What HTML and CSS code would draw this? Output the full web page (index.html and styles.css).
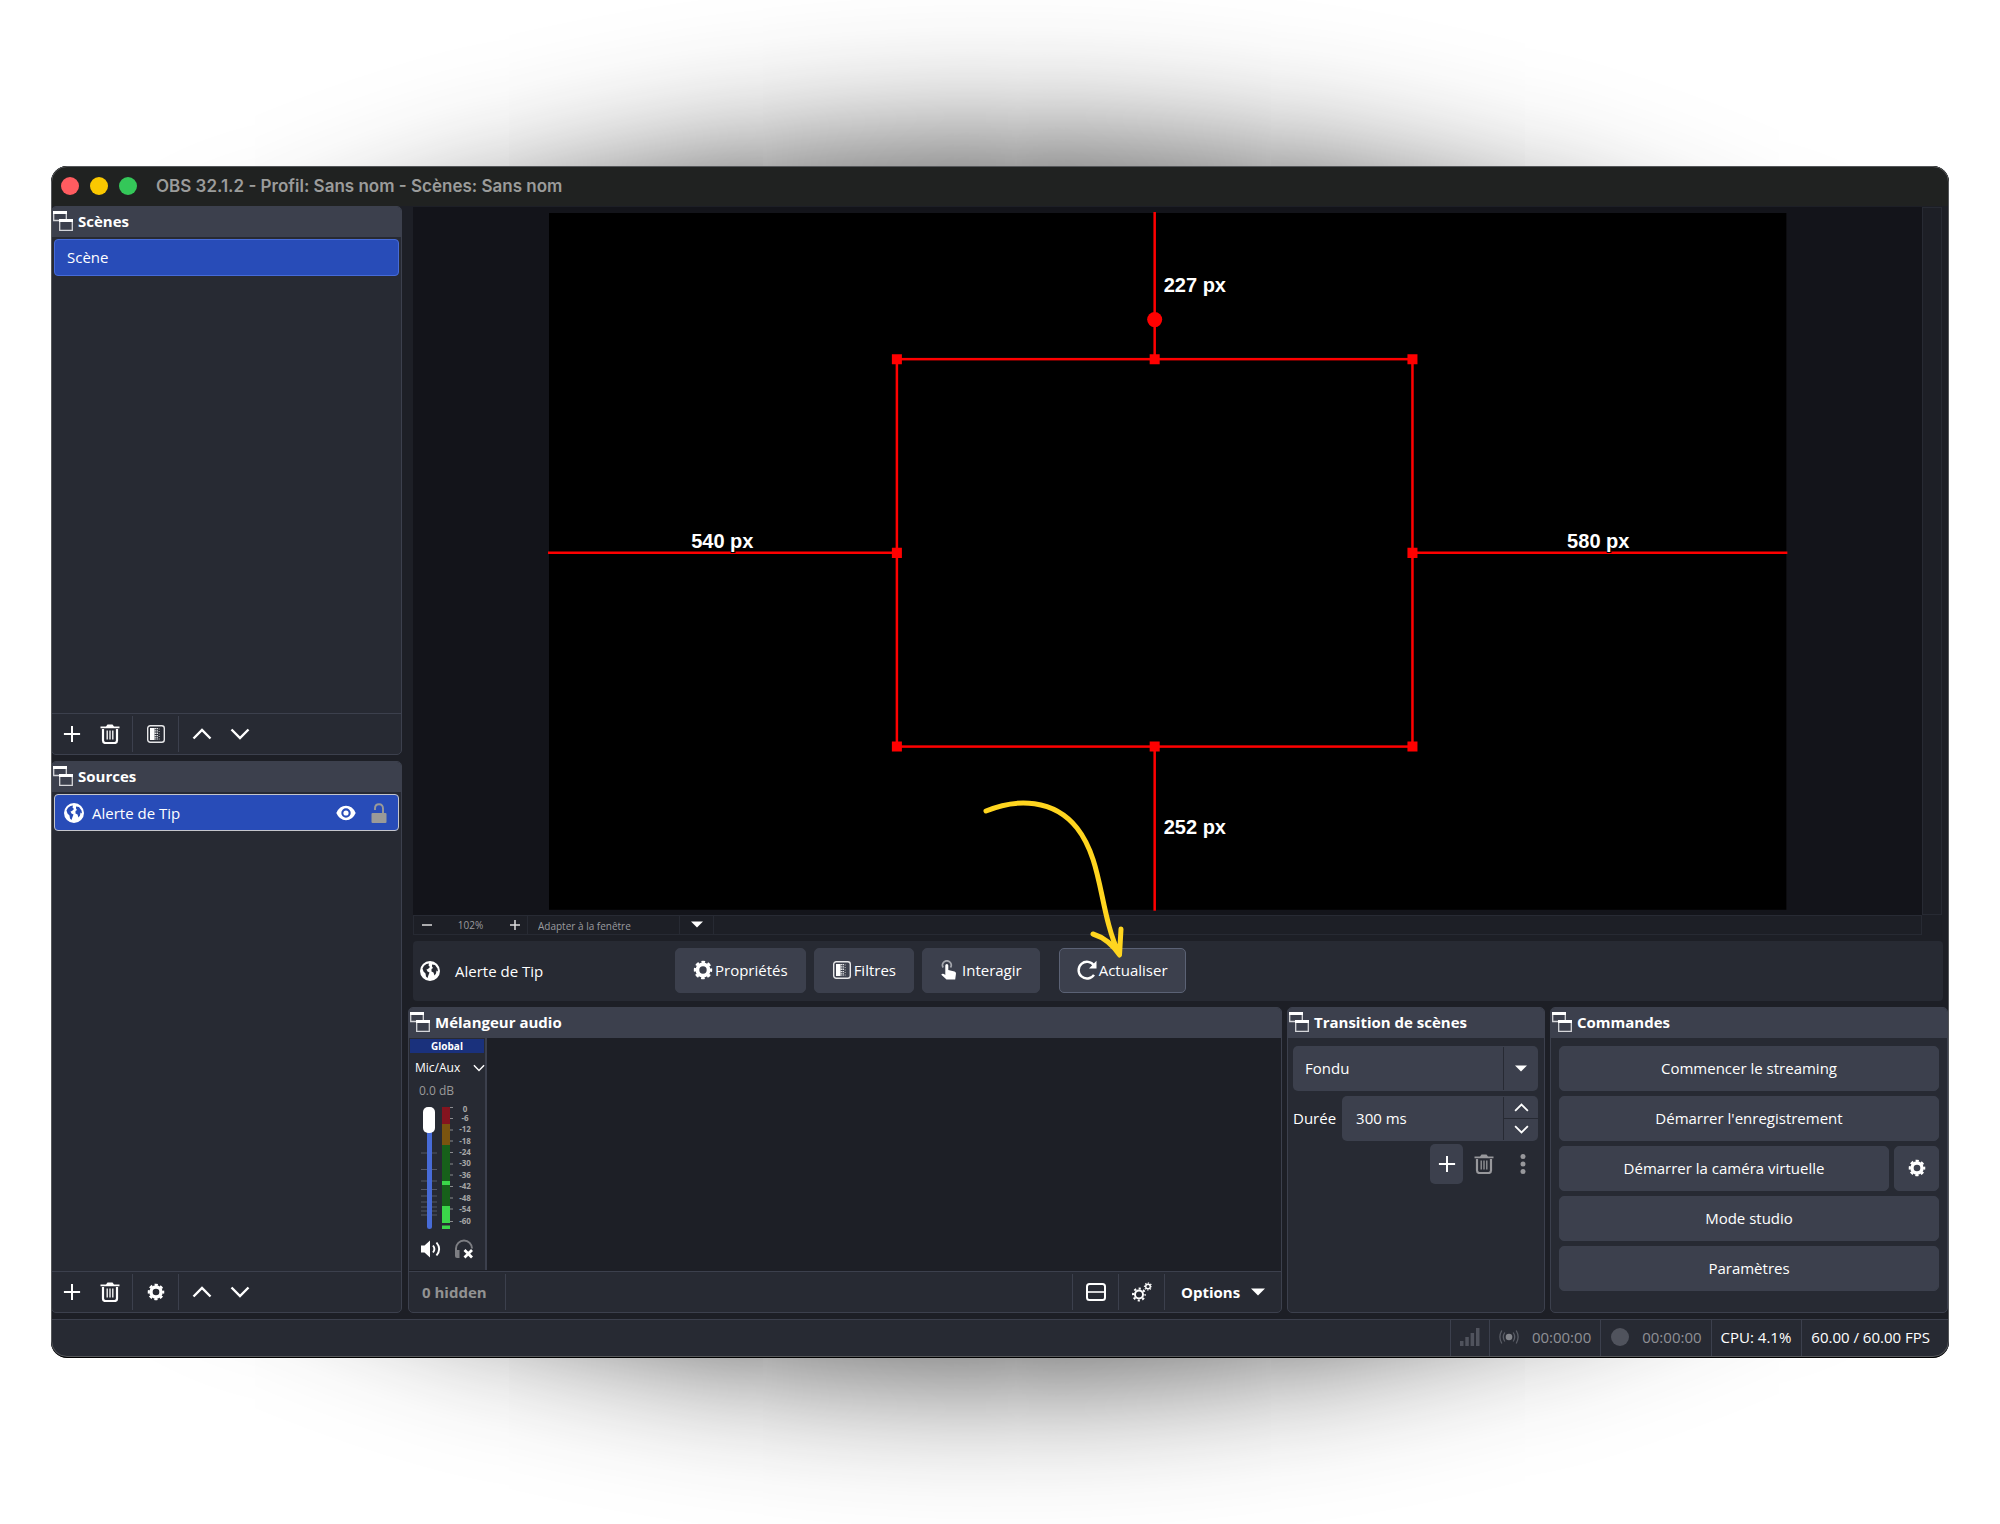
FILE: index.html
```html
<!DOCTYPE html>
<html lang="fr">
<head>
<meta charset="utf-8">
<meta name="viewport" content="width=device-width, initial-scale=1">
<title>OBS 32.1.2 - Profil: Sans nom - Scènes: Sans nom</title>
<link rel="stylesheet" href="styles.css">
</head>
<body>
<svg class="sprite" aria-hidden="true">
  <symbol id="i-dock" viewBox="0 0 20 20">
    <path d="M6 9.5H.7V1H13.300V8" fill="none" stroke="#d5d6da" stroke-width="1.300"/>
    <path d="M0 0H14V3H0Z" fill="#fff"/>
    <path d="M6.700 9H19.300V19.300H6.700Z" fill="none" stroke="#d5d6da" stroke-width="1.300"/>
    <path d="M6 8H20V11H6Z" fill="#fff"/>
  </symbol>
  <symbol id="i-plus" viewBox="0 0 20 20"><path d="M10 1V19M1 10H19" fill="none" stroke="currentColor" stroke-width="2.200"/></symbol>
  <symbol id="i-trash" viewBox="0 0 20 20">
    <path d="M.5 2.500H6L7.500.500H12.500L14 2.500H19.500V4.300H.5Z" fill="currentColor"/>
    <path d="M3 5V16.500Q3 19 5.500 19H14.500Q17 19 17 16.500V5" fill="none" stroke="currentColor" stroke-width="2.200"/>
    <path d="M7.200 6.500V15.500M10 6.500V15.500M12.800 6.500V15.500" stroke="currentColor" stroke-width="1.300"/>
  </symbol>
  <symbol id="i-filter" viewBox="0 0 20 20">
    <rect x="1.700" y="1.700" width="16.600" height="16.600" rx="2.500" fill="none" stroke="#e6e6e8" stroke-width="1.400"/>
    <path d="M4 4H8.500V16H4Z" fill="#fff"/>
    <path d="M9.200 4V16M11.200 4V16" stroke="#fff" stroke-width="1.300" stroke-dasharray="1.300 1"/>
    <path d="M13.200 4.500V16" stroke="#aaa" stroke-width="1.200" stroke-dasharray="1 1.500"/>
  </symbol>
  <symbol id="i-up" viewBox="0 0 20 20"><path d="M1.500 14.500L10 6L18.500 14.500" fill="none" stroke="currentColor" stroke-width="2.400"/></symbol>
  <symbol id="i-down" viewBox="0 0 20 20"><path d="M1.500 5.500L10 14L18.500 5.500" fill="none" stroke="currentColor" stroke-width="2.400"/></symbol>
  <symbol id="i-gear" viewBox="0 0 20 20">
    <circle cx="10" cy="10" r="5.600" fill="none" stroke="currentColor" stroke-width="3.800"/>
    <circle cx="10" cy="10" r="8" fill="none" stroke="currentColor" stroke-width="2.400" stroke-dasharray="3.600 2.683" stroke-dashoffset="1.800"/>
  </symbol>
  <symbol id="i-gears" viewBox="0 0 20 20">
    <circle cx="7" cy="12.500" r="4" fill="none" stroke="currentColor" stroke-width="2"/>
    <circle cx="7" cy="12.500" r="6" fill="none" stroke="currentColor" stroke-width="2" stroke-dasharray="2.200 2.512" stroke-dashoffset="1.100"/>
    <circle cx="16" cy="4.500" r="2.300" fill="none" stroke="currentColor" stroke-width="1.400"/>
    <circle cx="16" cy="4.500" r="3.500" fill="none" stroke="currentColor" stroke-width="1.200" stroke-dasharray="1.300 1.449" stroke-dashoffset=".65"/>
  </symbol>
  <symbol id="i-globe" viewBox="0 0 20 20">
    <path fill-rule="evenodd" fill="currentColor" d="M10 0a10 10 0 1 0 0 20a10 10 0 1 0 0-20ZM6.500 3L9 2.500L8.500 4.500L10 6L8 8L6.500 8.500L7.500 10.500L9.500 11.500L8.500 14L7.500 17L6 15.500L5.500 12.500L3.500 10.500L2.500 7.500L4 4.800ZM12 3.500L15 4L17.500 7.500L18 10.500L16.500 9.500L16 12.500L14.500 14.500L13.500 11.500L11.500 10.500L11.500 8L13 7L12 5.500Z"/>
  </symbol>
  <symbol id="i-eye" viewBox="0 0 20 20">
    <path fill-rule="evenodd" fill="#fff" d="M.3 10Q3.500 2.800 10 2.800T19.700 10Q16.500 17.200 10 17.200T.3 10ZM10 5.300a4.700 4.700 0 1 0 0 9.400a4.700 4.700 0 1 0 0-9.400Z"/>
    <circle cx="10" cy="10" r="2.600" fill="#fff"/>
  </symbol>
  <symbol id="i-unlock" viewBox="0 0 20 20">
    <path d="M6 7V5.500Q6 1.200 10 1.200T14 5.500V11" fill="none" stroke="#9a9a98" stroke-width="1.900"/>
    <rect x="2.500" y="10" width="15" height="10" rx="1" fill="#9a9a98"/>
  </symbol>
  <symbol id="i-hand" viewBox="0 0 20 20">
    <path d="M3.200 7.500A4.300 4.300 0 1 1 10.500 7.500" fill="none" stroke="#a4a6ad" stroke-width="1.700"/>
    <path d="M5.300 5.500Q5.300 4 6.800 4T8.300 5.500V10L14.500 11.500Q16 12 16 13.500L15.200 19.500H6.500L1.300 14.800Q2 13 4 14L5.300 15Z" fill="#fff"/>
  </symbol>
  <symbol id="i-refresh" viewBox="0 0 20 20">
    <path d="M17 5.500A8.400 8.400 0 1 0 17 14.800" fill="none" stroke="#fff" stroke-width="2.400"/>
    <path d="M19.500.8V8.500H12Z" fill="#fff"/>
  </symbol>
  <symbol id="i-speaker" viewBox="0 0 20 20">
    <path d="M0 6.500H3.500L9 1.500V18.500L3.500 13.500H0Z" fill="#fff"/>
    <path d="M12 6.500Q14.800 10 12 13.500M15.500 3.500Q20.800 10 15.500 16.500" fill="none" stroke="#fff" stroke-width="1.900"/>
  </symbol>
  <symbol id="i-phones" viewBox="0 0 20 20">
    <path d="M2 13V9.500A8 8 0 0 1 18 9.500" fill="none" stroke="#7d7e83" stroke-width="2"/>
    <path d="M1 11H5.500V19H3Q1 19 1 17Z" fill="#7d7e83"/>
    <path d="M10.500 11L18 18.500M18 11L10.500 18.500" stroke="#fff" stroke-width="2.800"/>
  </symbol>
  <symbol id="i-layout" viewBox="0 0 20 20">
    <rect x="1" y="2" width="18" height="16" rx="2.500" fill="none" stroke="#fff" stroke-width="2"/><path d="M1 10H19" stroke="#fff" stroke-width="1.600"/>
  </symbol>
  <symbol id="i-tri" viewBox="0 0 14 8"><path d="M0 .5H14L7 7.500Z" fill="#fff"/></symbol>
  <symbol id="i-dots" viewBox="0 0 20 20"><g fill="currentColor"><circle cx="10" cy="2.500" r="2.500"/><circle cx="10" cy="10" r="2.500"/><circle cx="10" cy="17.500" r="2.500"/></g></symbol>
  <symbol id="i-bars" viewBox="0 0 20 20"><path d="M0 14H3.500V19H0ZM5.300 10H8.800V19H5.300ZM10.600 6H14.100V19H10.600ZM16 1H19.500V19H16Z" fill="#50535d"/></symbol>
  <symbol id="i-live" viewBox="0 0 20 20">
    <circle cx="10" cy="10" r="3.300" fill="#83858b"/>
    <path d="M5.800 5.500Q2.800 10 5.800 14.500M14.200 5.500Q17.200 10 14.200 14.500M2.800 3.500Q-1 10 2.800 16.500M17.200 3.500Q21 10 17.200 16.500" fill="none" stroke="#5a5d66" stroke-width="1.300"/>
  </symbol>
</svg>

<div class="stage">
  <main class="window">
    <header class="titlebar">
      <span class="light red"></span><span class="light yellow"></span><span class="light green"></span>
      <h1>OBS 32.1.2 - Profil: Sans nom - Scènes: Sans nom</h1>
    </header>

    <div class="workspace">
      <div class="side">
        <section class="dock">
          <h2><svg class="icon"><use href="#i-dock"/></svg>Scènes</h2>
          <ul class="list"><li class="row scene">Scène</li></ul>
          <div class="tools">
            <button aria-label="Ajouter une scène"><svg class="icon sm"><use href="#i-plus"/></svg></button>
            <button aria-label="Supprimer la scène"><svg class="icon"><use href="#i-trash"/></svg></button>
            <i class="sep"></i>
            <button aria-label="Filtres de la scène"><svg class="icon"><use href="#i-filter"/></svg></button>
            <i class="sep"></i>
            <button aria-label="Monter la scène"><svg class="icon"><use href="#i-up"/></svg></button>
            <button aria-label="Descendre la scène"><svg class="icon"><use href="#i-down"/></svg></button>
          </div>
        </section>
        <section class="dock">
          <h2><svg class="icon"><use href="#i-dock"/></svg>Sources</h2>
          <ul class="list">
            <li class="row source">
              <svg class="icon"><use href="#i-globe"/></svg><span>Alerte de Tip</span>
              <button aria-label="Visible"><svg class="icon"><use href="#i-eye"/></svg></button>
              <button aria-label="Déverrouillé"><svg class="icon"><use href="#i-unlock"/></svg></button>
            </li>
          </ul>
          <div class="tools">
            <button aria-label="Ajouter une source"><svg class="icon sm"><use href="#i-plus"/></svg></button>
            <button aria-label="Supprimer la source"><svg class="icon"><use href="#i-trash"/></svg></button>
            <i class="sep"></i>
            <button aria-label="Propriétés de la source"><svg class="icon sm"><use href="#i-gear"/></svg></button>
            <i class="sep"></i>
            <button aria-label="Monter la source"><svg class="icon"><use href="#i-up"/></svg></button>
            <button aria-label="Descendre la source"><svg class="icon"><use href="#i-down"/></svg></button>
          </div>
        </section>
      </div>

      <div class="center">
        <div class="preview">
          <div class="view">
            <svg class="canvas" viewBox="0 0 1236 696">
              <rect width="1236" height="696" fill="#000"/>
              <g fill="none" stroke="#f00" stroke-width="2.500">
                <rect x="347.500" y="146" width="515" height="387"/>
                <path d="M605 -1V146M605 533V697M-1 339.500H347M863 339.500H1237"/>
              </g>
              <g fill="#f00">
                <circle cx="605" cy="106.500" r="7.500"/>
                <path d="M342.500 141h10v10h-10zM600 141h10v10h-10zM857.500 141h10v10h-10zM342.500 334.500h10v10h-10zM857.500 334.500h10v10h-10zM342.500 528h10v10h-10zM600 528h10v10h-10zM857.500 528h10v10h-10z"/>
              </g>
              <g class="measure">
                <text x="614" y="79">227 px</text>
                <text x="614" y="620">252 px</text>
                <text x="142" y="335">540 px</text>
                <text x="1017" y="335">580 px</text>
              </g>
            </svg>
          </div>
          <div class="vscroll"></div>
          <div class="zoombar">
            <button aria-label="Zoom arrière"><svg viewBox="0 0 10 10" width="10" height="10"><path d="M0 5H10" stroke="#ddd" stroke-width="1.500"/></svg></button>
            <output>102%</output>
            <button aria-label="Zoom avant"><svg viewBox="0 0 10 10" width="10" height="10"><path d="M0 5H10M5 0V10" stroke="#ddd" stroke-width="1.500"/></svg></button>
            <div class="scale">
              <select aria-label="Échelle de l'aperçu"><option>Adapter à la fenêtre</option></select>
              <span class="scale-arrow"><svg width="12" height="7"><use href="#i-tri"/></svg></span>
            </div>
          </div>
        </div>

        <div class="context">
          <svg class="icon"><use href="#i-globe"/></svg>
          <span class="context-name">Alerte de Tip</span>
          <button class="btn"><svg class="icon"><use href="#i-gear"/></svg>Propriétés</button>
          <button class="btn"><svg class="icon"><use href="#i-filter"/></svg>Filtres</button>
          <button class="btn"><svg class="icon"><use href="#i-hand"/></svg>Interagir</button>
          <button class="btn refresh"><svg class="icon"><use href="#i-refresh"/></svg>Actualiser
            <svg class="arrow" viewBox="980 798 150 164" aria-hidden="true"><path d="M986 812C1017 799 1054 800 1077 829C1103 862 1099 912 1119 955M1093 935Q1109 940 1119.500 956L1121 930"/></svg>
          </button>
        </div>

        <div class="docks">
          <section class="dock">
            <h2><svg class="icon"><use href="#i-dock"/></svg>Mélangeur audio</h2>
            <div class="mixer">
              <div class="strip">
                <div class="tag">Global</div>
                <button class="channel">Mic/Aux<svg width="12" height="12"><use href="#i-down"/></svg></button>
                <div class="db">0.0 dB</div>
                <div class="levels">
                  <div class="fader">
                    <svg class="ticks" viewBox="0 0 16 122" width="16" height="122"><path d="M0 46H16M0 62.500H16M0 74H16M0 82.500H16M0 89H16M0 95H16M0 100H16M0 104H16M0 108H16" stroke="#555966" stroke-width="1"/></svg>
                    <input type="range" min="0" max="100" value="100" aria-label="Volume Mic/Aux">
                  </div>
                  <svg class="meter" viewBox="0 0 34 124" width="34" height="124">
                    <path d="M0 0H8V17H0Z" fill="#84141f"/><path d="M0 17H8V38H0Z" fill="#7a540f"/><path d="M0 38H8V99H0Z" fill="#17601a"/>
                    <path d="M0 74H8V78H0ZM0 99H8V116H0ZM0 118.500H8V122H0Z" fill="#3bd64a"/>
                    <path d="M8 .5H11M8 11.500H11M8 23H11M8 34H11M8 45.500H11M8 57H11M8 68H11M8 79.500H11M8 91H11M8 102H11M8 114.500H11" stroke="#8a8b8f"/>
                    <g class="marks"><text x="23" y="5">0</text><text x="23" y="14">-6</text><text x="23" y="25">-12</text><text x="23" y="37">-18</text><text x="23" y="48">-24</text><text x="23" y="59">-30</text><text x="23" y="71">-36</text><text x="23" y="82">-42</text><text x="23" y="94">-48</text><text x="23" y="105">-54</text><text x="23" y="117">-60</text></g>
                  </svg>
                </div>
                <div class="strip-btns">
                  <button aria-label="Muet"><svg class="icon"><use href="#i-speaker"/></svg></button>
                  <button aria-label="Monitoring"><svg class="icon"><use href="#i-phones"/></svg></button>
                </div>
              </div>
            </div>
            <div class="tools">
              <span class="hidden-count">0 hidden</span>
              <i class="sep"></i><span class="grow"></span><i class="sep"></i>
              <button aria-label="Disposition"><svg class="icon"><use href="#i-layout"/></svg></button>
              <i class="sep"></i>
              <button aria-label="Propriétés audio avancées"><svg class="icon"><use href="#i-gears"/></svg></button>
              <i class="sep"></i>
              <button class="options">Options<svg width="14" height="8"><use href="#i-tri"/></svg></button>
            </div>
          </section>

          <section class="dock">
            <h2><svg class="icon"><use href="#i-dock"/></svg>Transition de scènes</h2>
            <div class="transition">
              <div class="field">
                <select aria-label="Transition"><option>Fondu</option></select>
                <span class="drop"><svg width="12" height="7"><use href="#i-tri"/></svg></span>
              </div>
              <div class="duration">
                <label for="duration">Durée</label>
                <div class="field">
                  <input id="duration" type="text" value="300 ms">
                  <div class="spin">
                    <button aria-label="Augmenter"><svg width="15" height="15"><use href="#i-up"/></svg></button>
                    <button aria-label="Diminuer"><svg width="15" height="15"><use href="#i-down"/></svg></button>
                  </div>
                </div>
              </div>
              <div class="trans-btns">
                <button class="add" aria-label="Ajouter une transition"><svg class="icon sm"><use href="#i-plus"/></svg></button>
                <button aria-label="Supprimer la transition"><svg class="icon"><use href="#i-trash"/></svg></button>
                <button aria-label="Plus d'options"><svg class="icon"><use href="#i-dots"/></svg></button>
              </div>
            </div>
          </section>

          <section class="dock">
            <h2><svg class="icon"><use href="#i-dock"/></svg>Commandes</h2>
            <div class="controls">
              <button class="btn">Commencer le streaming</button>
              <button class="btn">Démarrer l'enregistrement</button>
              <div class="pair">
                <button class="btn">Démarrer la caméra virtuelle</button>
                <button class="btn" aria-label="Configurer la caméra virtuelle"><svg class="icon sm"><use href="#i-gear"/></svg></button>
              </div>
              <button class="btn">Mode studio</button>
              <button class="btn">Paramètres</button>
            </div>
          </section>
        </div>
      </div>
    </div>

    <footer class="status">
      <span class="net"><svg class="icon"><use href="#i-bars"/></svg></span>
      <span class="timer"><svg class="icon"><use href="#i-live"/></svg>00:00:00</span>
      <span class="timer"><i class="rec"></i>00:00:00</span>
      <span class="cpu">CPU: 4.1%</span>
      <span class="fps">60.00 / 60.00 FPS</span>
    </footer>
  </main>
</div>
</body>
</html>
```
FILE: styles.css
```css
* { box-sizing: border-box; }

body {
  margin: 0;
  background: #fff;
  color: #fff;
  font: 15px/20px "Open Sans", "Noto Sans", sans-serif;
}

button, input, select {
  margin: 0;
  padding: 0;
  border: 0;
  background: none;
  color: inherit;
  font: inherit;
  appearance: none;
}

h1, h2, ul { margin: 0; padding: 0; list-style: none; }
svg { display: block; flex: none; }
.sprite { position: absolute; width: 0; height: 0; }
.icon { width: 20px; height: 20px; }
.icon.sm { width: 18px; height: 18px; }
.grow { flex: 1; }

.stage {
  position: relative;
  overflow: hidden;
  min-height: 100vh;
  padding: 166px 51px;
}

/* Elliptical glow that shows above and below the window only */
.stage::before {
  content: "";
  position: absolute;
  inset: 170px -70px;
  border-radius: 50%;
  box-shadow: 0 0 160px rgba(0, 0, 0, .86);
  clip-path: inset(-170px 121px);
}

.window {
  position: relative;
  overflow: hidden;
  border-radius: 16px;
  border-bottom: 1px solid #000;
  background: #1d1f26;
}

.window::after {
  content: "";
  position: absolute;
  inset: 0;
  border: 1px solid #55575a;
  border-radius: 16px;
  pointer-events: none;
}

.titlebar {
  display: flex;
  align-items: center;
  gap: 11px;
  height: 40px;
  padding-left: 10px;
  background: #202221;
}

.titlebar h1 {
  margin-left: 8px;
  color: #9b9c9b;
  font: 600 17px/20px Inter, "Liberation Sans", sans-serif;
}

.light { width: 18px; height: 18px; border-radius: 50%; }
.red { background: #ff5c60; }
.yellow { background: #fac800; }
.green { background: #34c759; }

.workspace {
  display: grid;
  grid-template-columns: 351px minmax(0, 1fr);
  gap: 6px;
  padding: 0 1px 6px 0;
}

.side {
  display: grid;
  grid-template-rows: 549fr 551fr;
  gap: 6px;
}

.dock {
  display: flex;
  flex-direction: column;
  overflow: hidden;
  border: 1px solid #3c404d;
  border-radius: 5px;
  background: #272a33;
}

.dock h2 {
  display: flex;
  align-items: center;
  gap: 5px;
  height: 30px;
  padding: 0 0 2px 1px;
  background: #3c404d;
  font-size: 15px;
  font-weight: 700;
}

.list { flex: 1; padding: 2px; }

.row {
  display: flex;
  align-items: center;
  height: 37px;
  padding-bottom: 1px;
  border: 1px solid #476bd7;
  border-radius: 4px;
  background: #284cb8;
}

.scene { padding-left: 12px; }
.source { gap: 8px; padding: 0 9px; border-color: #c4c5cc; }
.source span { flex: 1; }
.source button + button { margin-left: 5px; }

.tools {
  display: flex;
  align-items: center;
  height: 41px;
  padding: 0 1px;
  border-top: 1px solid #3c404d;
}

.tools button, .trans-btns button {
  display: flex;
  align-items: center;
  justify-content: center;
  width: 38px;
  height: 36px;
}

.sep { width: 1px; height: 36px; margin: 0 4px 0 3px; background: #3c404d; }

.center { display: flex; flex-direction: column; gap: 6px; }

.preview {
  display: grid;
  grid-template-columns: minmax(0, 1fr) 20px;
  margin: 1px 6px 0 5px;
}

.view {
  display: flex;
  justify-content: center;
  padding: 6px 0 5px;
  background: #13141a;
}

.canvas { width: 82%; overflow: visible; }

.measure {
  fill: #fff;
  stroke: #000;
  stroke-width: 2px;
  paint-order: stroke;
  font: 700 20px "Liberation Sans", Arial, sans-serif;
}

.vscroll { border: 1px solid #272a33; }

.zoombar {
  display: flex;
  align-items: center;
  height: 20px;
  border: 1px solid #272a33;
  color: #9a9b9f;
  font-size: 10px;
}

.zoombar button { display: flex; justify-content: center; width: 25px; }
.zoombar output { width: 63px; text-align: center; }

.scale {
  display: flex;
  height: 18px;
  border: solid #272a33;
  border-width: 0 1px;
}

.scale select { width: 151px; padding-left: 10px; }

.scale-arrow {
  display: flex;
  align-items: center;
  justify-content: center;
  width: 34px;
  border-left: 1px solid #272a33;
}

.context {
  display: flex;
  align-items: center;
  gap: 8px;
  height: 60px;
  margin: 0 5px;
  padding: 0 7px;
  border-radius: 4px;
  background: #272a33;
}

.context-name { width: 212px; margin-left: 7px; }

.btn {
  display: flex;
  align-items: center;
  justify-content: center;
  gap: 2px;
  height: 45px;
  padding: 0 17px 1px;
  border: 1px solid #3c404d;
  border-radius: 5px;
  background: #3c404d;
}

.refresh {
  position: relative;
  margin-left: 11px;
  border-color: #5b6275;
}

.arrow {
  position: absolute;
  left: -80px;
  top: -152px;
  width: 150px;
  height: 164px;
  fill: none;
  stroke: #ffd51f;
  stroke-width: 5px;
  stroke-linecap: round;
  stroke-linejoin: round;
  pointer-events: none;
}

.docks {
  display: grid;
  grid-template-columns: minmax(0, 1fr) 258px 398px;
  gap: 5px;
}

.mixer { flex: 1; padding-bottom: 1px; background: #1d1f26; }

.strip {
  width: 78px;
  height: 100%;
  border-right: 2px solid #3c404d;
  background: #272a33;
}

.tag {
  height: 16px;
  border: 1px solid #272a33;
  background: #1a317c;
  font-size: 10px;
  font-weight: 700;
  line-height: 14px;
  text-align: center;
}

.channel {
  display: flex;
  align-items: center;
  justify-content: space-between;
  width: 100%;
  height: 28px;
  padding-left: 6px;
  font-size: 12px;
}

.db { padding-left: 10px; color: #9a9a9a; font-size: 12px; line-height: 18px; }

.levels { display: flex; gap: 5px; padding: 7px 0 0 12px; }
.fader { position: relative; width: 16px; height: 122px; }
.ticks { position: absolute; inset: 0; }

.fader input {
  position: relative;
  display: block;
  width: 16px;
  height: 122px;
  writing-mode: vertical-lr;
  direction: rtl;
}

.fader input::-webkit-slider-runnable-track {
  width: 5px;
  height: 122px;
  border-radius: 3px;
  background: #476bd7;
}

.fader input::-webkit-slider-thumb {
  width: 12px;
  height: 26px;
  margin-left: -4px;
  border-radius: 5px;
  background: #fff;
  appearance: none;
}

.meter { overflow: visible; }
.marks { fill: #a6a6a6; font-size: 8px; font-weight: 700; text-anchor: middle; }

.strip-btns { display: flex; gap: 13px; padding: 8px 0 0 12px; }

.hidden-count { width: 92px; padding-left: 12px; color: #929292; font-weight: 700; }

.tools .options {
  justify-content: flex-start;
  gap: 11px;
  width: 111px;
  padding-left: 12px;
  font-weight: 700;
}

.transition { display: flex; flex-direction: column; gap: 5px; padding: 8px 6px 0 5px; }

.field {
  display: flex;
  flex: 1;
  min-width: 0;
  border-radius: 5px;
  background: #3c404d;
}

.field select, .field input { flex: 1; min-width: 0; height: 45px; padding: 0 0 1px 12px; }
.field input { padding-left: 14px; }

.drop, .spin {
  width: 35px;
  margin: 1px 0;
  border-left: 1px solid #272a33;
}

.drop { display: flex; align-items: center; justify-content: center; }
.spin { display: grid; grid-template-rows: 1fr 1fr; }
.spin button { display: grid; place-items: center; }
.spin button + button { border-top: 1px solid #272a33; }

.duration { display: flex; align-items: center; gap: 6px; }

.trans-btns { display: flex; justify-content: flex-end; gap: 3px; margin: -2px -3px 0 0; }
.trans-btns button { height: 40px; width: 36px; color: #98989c; }
.trans-btns .add { width: 33px; border-radius: 5px; background: #3c404d; color: #fff; }

.controls { display: grid; gap: 5px; padding: 8px 8px 21px; }
.pair { display: grid; grid-template-columns: minmax(0, 1fr) 45px; gap: 5px; }
.pair .btn { padding: 0 0 1px; }

.status {
  display: flex;
  justify-content: flex-end;
  height: 38px;
  border-top: 1px solid #3c404d;
  background: #272a33;
}

.status > span {
  display: flex;
  align-items: center;
  padding: 0 9px 2px;
  border-left: 1px solid #3c404d;
}

.timer { gap: 13px; color: #8f9096; }
.rec { width: 18px; height: 18px; margin-left: 1px; border-radius: 50%; background: #50535d; }
.status .cpu { padding-right: 10px; }
.status .fps { padding-right: 19px; }
```
